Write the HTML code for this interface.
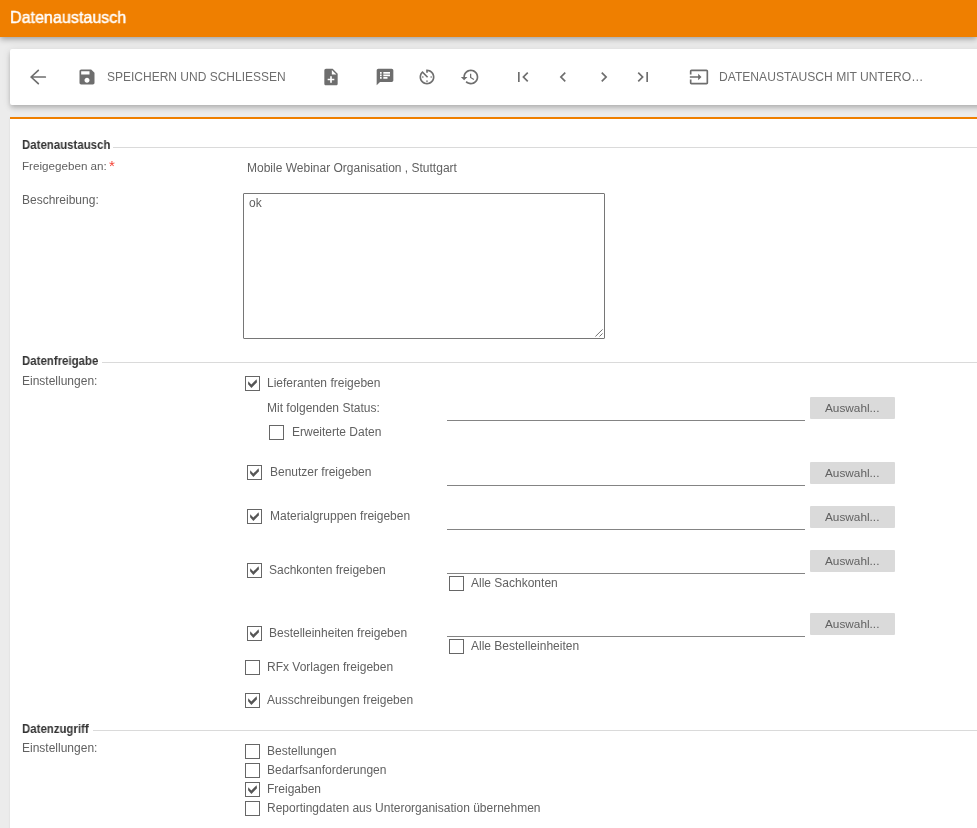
<!DOCTYPE html>
<html><head><meta charset="utf-8"><title>Datenaustausch</title><style>
html,body{margin:0;padding:0}
body{width:977px;height:828px;overflow:hidden;position:relative;background:#ececec;font-family:"Liberation Sans",sans-serif}
.t{position:absolute;white-space:nowrap;will-change:transform}
#hdr{position:absolute;left:0;top:0;width:977px;height:37px;background:#ef7f00;box-shadow:0 2px 6px rgba(0,0,0,.34)}
#tb{position:absolute;left:10px;top:49px;width:1000px;height:56px;background:#fff;border-radius:2px;box-shadow:0 2px 4px -1px rgba(0,0,0,.14),0 4px 5px 0 rgba(0,0,0,.1),0 1px 10px 0 rgba(0,0,0,.09)}
#card{position:absolute;left:10px;top:117px;width:1000px;height:800px;background:#fff;border-top:2px solid #ef7f00;box-shadow:0 1px 2px rgba(0,0,0,.09)}
.ic{position:absolute;fill:#6e6e6e}
.sl{position:absolute;width:1000px;height:1px;background:#dadada}
#ta{position:absolute;left:243px;top:193px;width:360px;height:144px;border:1px solid #767676;background:#fff;border-radius:1px}
.cb{position:absolute;width:13px;height:13px;border:1px solid #666;background:#fff}
.cb svg{position:absolute;left:-1px;top:-1px}
.ln{position:absolute;left:447px;width:358px;height:1px;background:#848484}
.btn{position:absolute;left:810px;width:85px;height:22px;background:#dadada;border-radius:1px}
.btn span{position:absolute;left:15.4px;top:4.7px;font-size:11.8px;line-height:12px;color:#616161;white-space:nowrap;will-change:transform}
</style></head><body>
<div id="hdr"></div>
<div class="t" style="left:10.0px;top:8.93px;font-size:16.5px;line-height:16.5px;color:#fff;font-weight:normal;transform:scaleX(0.975);transform-origin:0 0;-webkit-text-stroke:0.45px #fff;">Datenaustausch</div>
<div id="tb"></div>
<svg class="ic" style="left:26px;top:65px" width="24" height="24" viewBox="0 0 24 24"><path d="M12.3 5.3 L5.1 12 L12.3 18.7 M5.1 12 H19.3" fill="none" stroke="#6e6e6e" stroke-width="1.7" stroke-linecap="round" stroke-linejoin="round"/></svg>
<svg class="ic" style="left:77.4px;top:66.9px" width="20" height="20" viewBox="0 0 24 24"><path d="M17 3H5c-1.11 0-2 .9-2 2v14c0 1.1.89 2 2 2h14c1.1 0 2-.9 2-2V7l-4-4zm-5 16c-1.66 0-3-1.34-3-3s1.34-3 3-3 3 1.34 3 3-1.34 3-3 3zm3-10H5V5h10v4z" /></svg>
<div class="t" style="left:106.8px;top:71.14px;font-size:12px;line-height:12px;color:#6e6e6e;font-weight:normal;">SPEICHERN UND SCHLIESSEN</div>
<svg class="ic" style="left:321.0px;top:67px" width="20" height="20" viewBox="0 0 24 24"><path d="M14 2H6c-1.1 0-1.99.9-1.99 2L4 20c0 1.1.89 2 1.99 2H18c1.1 0 2-.9 2-2V8l-6-6zm2 14h-3v3h-2v-3H8v-2h3v-3h2v3h3v2zm-3-7V3.5L18.5 9H13z" /></svg>
<svg class="ic" style="left:375.0px;top:67.3px" width="20" height="20" viewBox="0 0 24 24"><path d="M20 2H4c-1.1 0-1.99.9-1.99 2L2 22l4-4h14c1.1 0 2-.9 2-2V4c0-1.1-.9-2-2-2zM8 14H6v-2h2v2zm0-3H6V9h2v2zm0-3H6V6h2v2zm7 6h-5v-2h5v2zm3-3h-8V9h8v2zm0-3h-8V6h8v2z" /></svg>
<svg class="ic" style="left:417.3px;top:66.9px" width="20" height="20" viewBox="0 0 24 24"><path d="M11 17c0 .55.45 1 1 1s1-.45 1-1-.45-1-1-1-1 .45-1 1zm0-14v4h2V5.08c3.39.49 6 3.39 6 6.92 0 3.870-3.13 7-7 7s-7-3.13-7-7c0-1.68.59-3.22 1.58-4.5L12 13l1.41-1.41-6.8-6.8v.02C4.42 6.45 3 9.05 3 12c0 4.97 4.02 9 9 9 4.97 0 9-4.03 9-9s-4.03-9-9-9h-1zm7 9c0-.55-.45-1-1-1s-1 .45-1 1 .45 1 1 1 1-.45 1-1zM6 12c0 .55.45 1 1 1s1-.45 1-1-.45-1-1-1-1 .45-1 1z" /></svg>
<svg class="ic" style="left:459.6px;top:67px" width="20" height="20" viewBox="0 0 24 24"><path d="M13 3c-4.97 0-9 4.03-9 9H1l3.89 3.89.07.14L9 12H6c0-3.87 3.13-7 7-7s7 3.13 7 7-3.13 7-7 7c-1.93 0-3.68-.79-4.94-2.06l-1.42 1.42C8.27 19.990 10.51 21 13 21c4.97 0 9-4.03 9-9s-4.03-9-9-9zm-1 5v5l4.28 2.54.72-1.21-3.5-2.08V8H12z" /></svg>
<svg class="ic" style="left:513px;top:67px" width="20" height="20" viewBox="0 0 24 24"><path d="M18.41 16.59L13.82 12l4.59-4.59L17 6l-6 6 6 6zM6 6h2v12H6z" /></svg>
<svg class="ic" style="left:553.4px;top:67px" width="20" height="20" viewBox="0 0 24 24"><path d="M15.41 7.41L14 6l-6 6 6 6 1.41-1.41L10.83 12z" /></svg>
<svg class="ic" style="left:593.7px;top:67px" width="20" height="20" viewBox="0 0 24 24"><path d="M10 6L8.59 7.41 13.17 12l-4.58 4.59L10 18l6-6z" /></svg>
<svg class="ic" style="left:633.3px;top:67px" width="20" height="20" viewBox="0 0 24 24"><path d="M5.59 7.41L10.18 12l-4.59 4.59L7 18l6-6-6-6zM16 6h2v12h-2z" /></svg>
<svg class="ic" style="left:689.2px;top:67.2px" width="20" height="20" viewBox="0 0 24 24"><path d="M21 3.01H3c-1.1 0-2 .9-2 2V9h2V4.99h18v14.03H3V15H1v4.01c0 1.1.9 1.98 2 1.98h18c1.1 0 2-.88 2-1.98v-14c0-1.11-.9-2-2-2zM11 16l4-4-4-4v3H1v2h10v3z" /></svg>
<div class="t" style="left:719.3px;top:71.06px;font-size:12.1px;line-height:12.1px;color:#6e6e6e;font-weight:normal;">DATENAUSTAUSCH MIT UNTERO…</div>
<div id="card"></div>
<div class="t" style="left:21.6px;top:139.32px;font-size:12.5px;line-height:12.5px;color:#333;font-weight:bold;transform:scaleX(0.915);transform-origin:0 0;">Datenaustausch</div>
<div class="sl" style="left:113px;top:147px"></div>
<div class="t" style="left:21.6px;top:354.72px;font-size:12.5px;line-height:12.5px;color:#333;font-weight:bold;transform:scaleX(0.915);transform-origin:0 0;">Datenfreigabe</div>
<div class="sl" style="left:102px;top:362px"></div>
<div class="t" style="left:21.6px;top:722.62px;font-size:12.5px;line-height:12.5px;color:#333;font-weight:bold;transform:scaleX(0.915);transform-origin:0 0;">Datenzugriff</div>
<div class="sl" style="left:93px;top:730px"></div>
<div class="t" style="left:21.6px;top:159.84px;font-size:11.65px;line-height:11.65px;color:#616161;font-weight:normal;">Freigegeben an:</div>
<div class="t" style="left:109.1px;top:158.30px;font-size:15px;line-height:15px;color:#f44336;font-weight:normal;">*</div>
<div class="t" style="left:21.6px;top:193.64px;font-size:12px;line-height:12px;color:#616161;font-weight:normal;">Beschreibung:</div>
<div class="t" style="left:21.6px;top:374.64px;font-size:12px;line-height:12px;color:#616161;font-weight:normal;">Einstellungen:</div>
<div class="t" style="left:21.6px;top:742.34px;font-size:12px;line-height:12px;color:#616161;font-weight:normal;">Einstellungen:</div>
<div class="t" style="left:246.6px;top:161.94px;font-size:12px;line-height:12px;color:#616161;font-weight:normal;">Mobile Webinar Organisation , Stuttgart</div>
<div id="ta"></div>
<div class="t" style="left:249.2px;top:196.84px;font-size:12px;line-height:12px;color:#616161;font-weight:normal;">ok</div>
<svg style="position:absolute;left:593px;top:327px" width="11" height="11" viewBox="0 0 11 11"><path d="M2.4 9.5 L9.6 2.4 M6.5 9.5 L9.6 6.4" stroke="#5a5a5a" stroke-width="0.85" fill="none"/></svg>
<div class="cb" style="left:245px;top:376px"><svg width="15" height="15" viewBox="0 0 15 15"><path d="M3.2 5.2 L6.3 8.6 L11.6 3.2 L12 6.2 L6.4 11.9 L3.1 8.2 Z" fill="#555"/></svg></div>
<div class="t" style="left:267.4px;top:376.64px;font-size:12px;line-height:12px;color:#616161;font-weight:normal;">Lieferanten freigeben</div>
<div class="cb" style="left:269px;top:425px"></div>
<div class="t" style="left:291.7px;top:425.84px;font-size:12px;line-height:12px;color:#616161;font-weight:normal;">Erweiterte Daten</div>
<div class="cb" style="left:247px;top:465px"><svg width="15" height="15" viewBox="0 0 15 15"><path d="M3.2 5.2 L6.3 8.6 L11.6 3.2 L12 6.2 L6.4 11.9 L3.1 8.2 Z" fill="#555"/></svg></div>
<div class="t" style="left:269.5px;top:466.04px;font-size:12px;line-height:12px;color:#616161;font-weight:normal;">Benutzer freigeben</div>
<div class="cb" style="left:247px;top:509px"><svg width="15" height="15" viewBox="0 0 15 15"><path d="M3.2 5.2 L6.3 8.6 L11.6 3.2 L12 6.2 L6.4 11.9 L3.1 8.2 Z" fill="#555"/></svg></div>
<div class="t" style="left:269.5px;top:510.24px;font-size:12px;line-height:12px;color:#616161;font-weight:normal;">Materialgruppen freigeben</div>
<div class="cb" style="left:247px;top:563px"><svg width="15" height="15" viewBox="0 0 15 15"><path d="M3.2 5.2 L6.3 8.6 L11.6 3.2 L12 6.2 L6.4 11.9 L3.1 8.2 Z" fill="#555"/></svg></div>
<div class="t" style="left:269.3px;top:563.84px;font-size:12px;line-height:12px;color:#616161;font-weight:normal;">Sachkonten freigeben</div>
<div class="cb" style="left:449px;top:576px"></div>
<div class="t" style="left:471.4px;top:577.04px;font-size:12px;line-height:12px;color:#616161;font-weight:normal;">Alle Sachkonten</div>
<div class="cb" style="left:247px;top:626px"><svg width="15" height="15" viewBox="0 0 15 15"><path d="M3.2 5.2 L6.3 8.6 L11.6 3.2 L12 6.2 L6.4 11.9 L3.1 8.2 Z" fill="#555"/></svg></div>
<div class="t" style="left:269.4px;top:626.74px;font-size:12px;line-height:12px;color:#616161;font-weight:normal;">Bestelleinheiten freigeben</div>
<div class="cb" style="left:449px;top:639px"></div>
<div class="t" style="left:471.4px;top:639.54px;font-size:12px;line-height:12px;color:#616161;font-weight:normal;">Alle Bestelleinheiten</div>
<div class="cb" style="left:245px;top:660px"></div>
<div class="t" style="left:267.3px;top:660.74px;font-size:12px;line-height:12px;color:#616161;font-weight:normal;">RFx Vorlagen freigeben</div>
<div class="cb" style="left:245px;top:693px"><svg width="15" height="15" viewBox="0 0 15 15"><path d="M3.2 5.2 L6.3 8.6 L11.6 3.2 L12 6.2 L6.4 11.9 L3.1 8.2 Z" fill="#555"/></svg></div>
<div class="t" style="left:267.3px;top:693.84px;font-size:12px;line-height:12px;color:#616161;font-weight:normal;">Ausschreibungen freigeben</div>
<div class="cb" style="left:245px;top:744px"></div>
<div class="t" style="left:266.8px;top:744.74px;font-size:12px;line-height:12px;color:#616161;font-weight:normal;">Bestellungen</div>
<div class="cb" style="left:245px;top:763px"></div>
<div class="t" style="left:266.8px;top:763.74px;font-size:12px;line-height:12px;color:#616161;font-weight:normal;">Bedarfsanforderungen</div>
<div class="cb" style="left:245px;top:782px"><svg width="15" height="15" viewBox="0 0 15 15"><path d="M3.2 5.2 L6.3 8.6 L11.6 3.2 L12 6.2 L6.4 11.9 L3.1 8.2 Z" fill="#555"/></svg></div>
<div class="t" style="left:266.8px;top:782.74px;font-size:12px;line-height:12px;color:#616161;font-weight:normal;">Freigaben</div>
<div class="cb" style="left:245px;top:801px"></div>
<div class="t" style="left:266.8px;top:801.74px;font-size:12px;line-height:12px;color:#616161;font-weight:normal;">Reportingdaten aus Unterorganisation übernehmen</div>
<div class="t" style="left:267.4px;top:402.04px;font-size:12px;line-height:12px;color:#616161;font-weight:normal;">Mit folgenden Status:</div>
<div class="ln" style="top:420px"></div>
<div class="ln" style="top:485px"></div>
<div class="ln" style="top:529px"></div>
<div class="ln" style="top:573px"></div>
<div class="ln" style="top:636px"></div>
<div class="btn" style="top:397px"><span>Auswahl...</span></div>
<div class="btn" style="top:462px"><span>Auswahl...</span></div>
<div class="btn" style="top:506px"><span>Auswahl...</span></div>
<div class="btn" style="top:550px"><span>Auswahl...</span></div>
<div class="btn" style="top:613px"><span>Auswahl...</span></div>
</body></html>
